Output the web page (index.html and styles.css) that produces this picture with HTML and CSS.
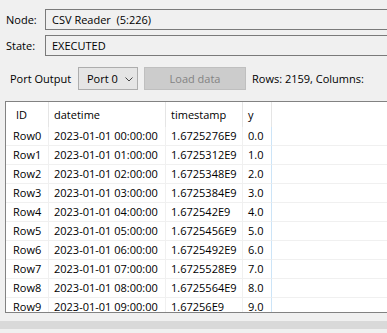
FILE: index.html
```html
<!DOCTYPE html>
<html>
    <head>
        <meta http-equiv="Content-Type" content="text/html; charset=utf-8"/>
        <link rel="stylesheet" href="styles.css">
    </head>
    <body>
        <div class="info">
            <div class="info_row">
                <div class="lbl">Node:</div>
                <div class="field">CSV Reader&nbsp; (5:226)</div>
            </div>
            <div class="info_row">
                <div class="lbl">State:</div>
                <div class="field">EXECUTED</div>
            </div>
        </div>

        <div class="port_row">
            <div class="port_lbl">Port Output</div>
            <div class="sel">
                <span>Port 0</span>
                <svg width="8" height="5" viewBox="0 0 8 5"><path d="M0.5 0.5 L4 4 L7.5 0.5" fill="none" stroke="#444" stroke-width="1"/></svg>
            </div>
            <div class="butt">Load data</div>
            <div class="count">Rows: 2159, Columns:</div>
        </div>

        <div class="tbl">
            <div class="hdr">
                <div class="c c1 first">ID</div>
                <div class="c c2">datetime</div>
                <div class="c c3">timestamp</div>
                <div class="c c4">y</div>
                <div class="c c5"></div>
            </div>
            <div id="rows"></div>
        </div>
        <div class="bottom"><div class="band"></div></div>

        <script>
            var stamps = ['1.6725276E9','1.6725312E9','1.6725348E9','1.6725384E9','1.672542E9',
                          '1.6725456E9','1.6725492E9','1.6725528E9','1.6725564E9','1.67256E9'];
            var html = '';
            for (var i = 0; i < 10; i++) {
                html += '<div class="row">'
                    + '<div class="c c1 rid">Row' + i + '</div>'
                    + '<div class="c c2">2023-01-01 0' + i + ':00:00</div>'
                    + '<div class="c c3">' + stamps[i] + '</div>'
                    + '<div class="c c4 last">' + i + '.0</div>'
                    + '<div class="c c5"></div>'
                    + '</div>';
            }
            document.getElementById('rows').innerHTML = html;
        </script>
    </body>
</html>
```
FILE: styles.css
```css
html, body {
    margin: 0;
    padding: 0;
    overflow: hidden;
}

body {
    background-color: #f0f0f0;
    font-family: "Open Sans", "Liberation Sans", sans-serif;
    font-size: 11px;
    color: #000;
    padding-top: 9px;
    height: 324px;
}

.info_row {
    display: flex;
    align-items: center;
    height: 21px;
    margin-bottom: 5px;
}

.lbl {
    width: 39px;
    padding-left: 6px;
}

.field {
    flex: 1;
    height: 19px;
    line-height: 19px;
    border: 1px solid #7a7a7a;
    border-right: none;
    padding-left: 6px;
    background-color: #f0f0f0;
}

.port_row {
    display: flex;
    align-items: center;
    height: 23px;
    margin-top: 11px;
    padding-left: 10px;
}

.port_lbl {
    width: 68px;
}

.sel {
    box-sizing: border-box;
    width: 60px;
    height: 23px;
    border: 1px solid #adadad;
    background-color: #e5e5e5;
    display: flex;
    align-items: center;
    justify-content: space-between;
    padding: 0 4px 0 8px;
}

.sel svg {
    margin-top: 1px;
}

.butt {
    box-sizing: border-box;
    width: 102px;
    height: 23px;
    line-height: 21px;
    margin-left: 6px;
    border: 1px solid #bfbfbf;
    background-color: #cccccc;
    color: #838383;
    text-align: center;
}

.count {
    margin-left: 6px;
    white-space: nowrap;
}

.tbl {
    margin-top: 11px;
    margin-left: 5px;
    height: 210px;
    border: 1px solid #828282;
    border-right: none;
    background-color: #fff;
    overflow: hidden;
}

.hdr, .row {
    display: grid;
    grid-template-columns: 43px 117px 77px 29px 1fr;
}

.hdr {
    height: 25px;
    line-height: 25px;
}

.row {
    height: 19px;
    line-height: 18px;
}

.c {
    box-sizing: border-box;
    padding-left: 5px;
    white-space: nowrap;
    overflow: hidden;
    border-right: 1px solid #f0f0f0;
}

.hdr .c {
    border-right-color: #e5e5e5;
}

.hdr .first {
    padding-left: 10px;
}

.row .c {
    border-bottom: 1px solid #f0f0f0;
}

.rid {
    padding-left: 7px;
}

.row .last {
    border-right-color: #cce4f7;
}

.c5 {
    border-right: none;
}

.bottom {
    padding-top: 8px;
}

.band {
    height: 8px;
    background-color: #d9d9d9;
}
```
